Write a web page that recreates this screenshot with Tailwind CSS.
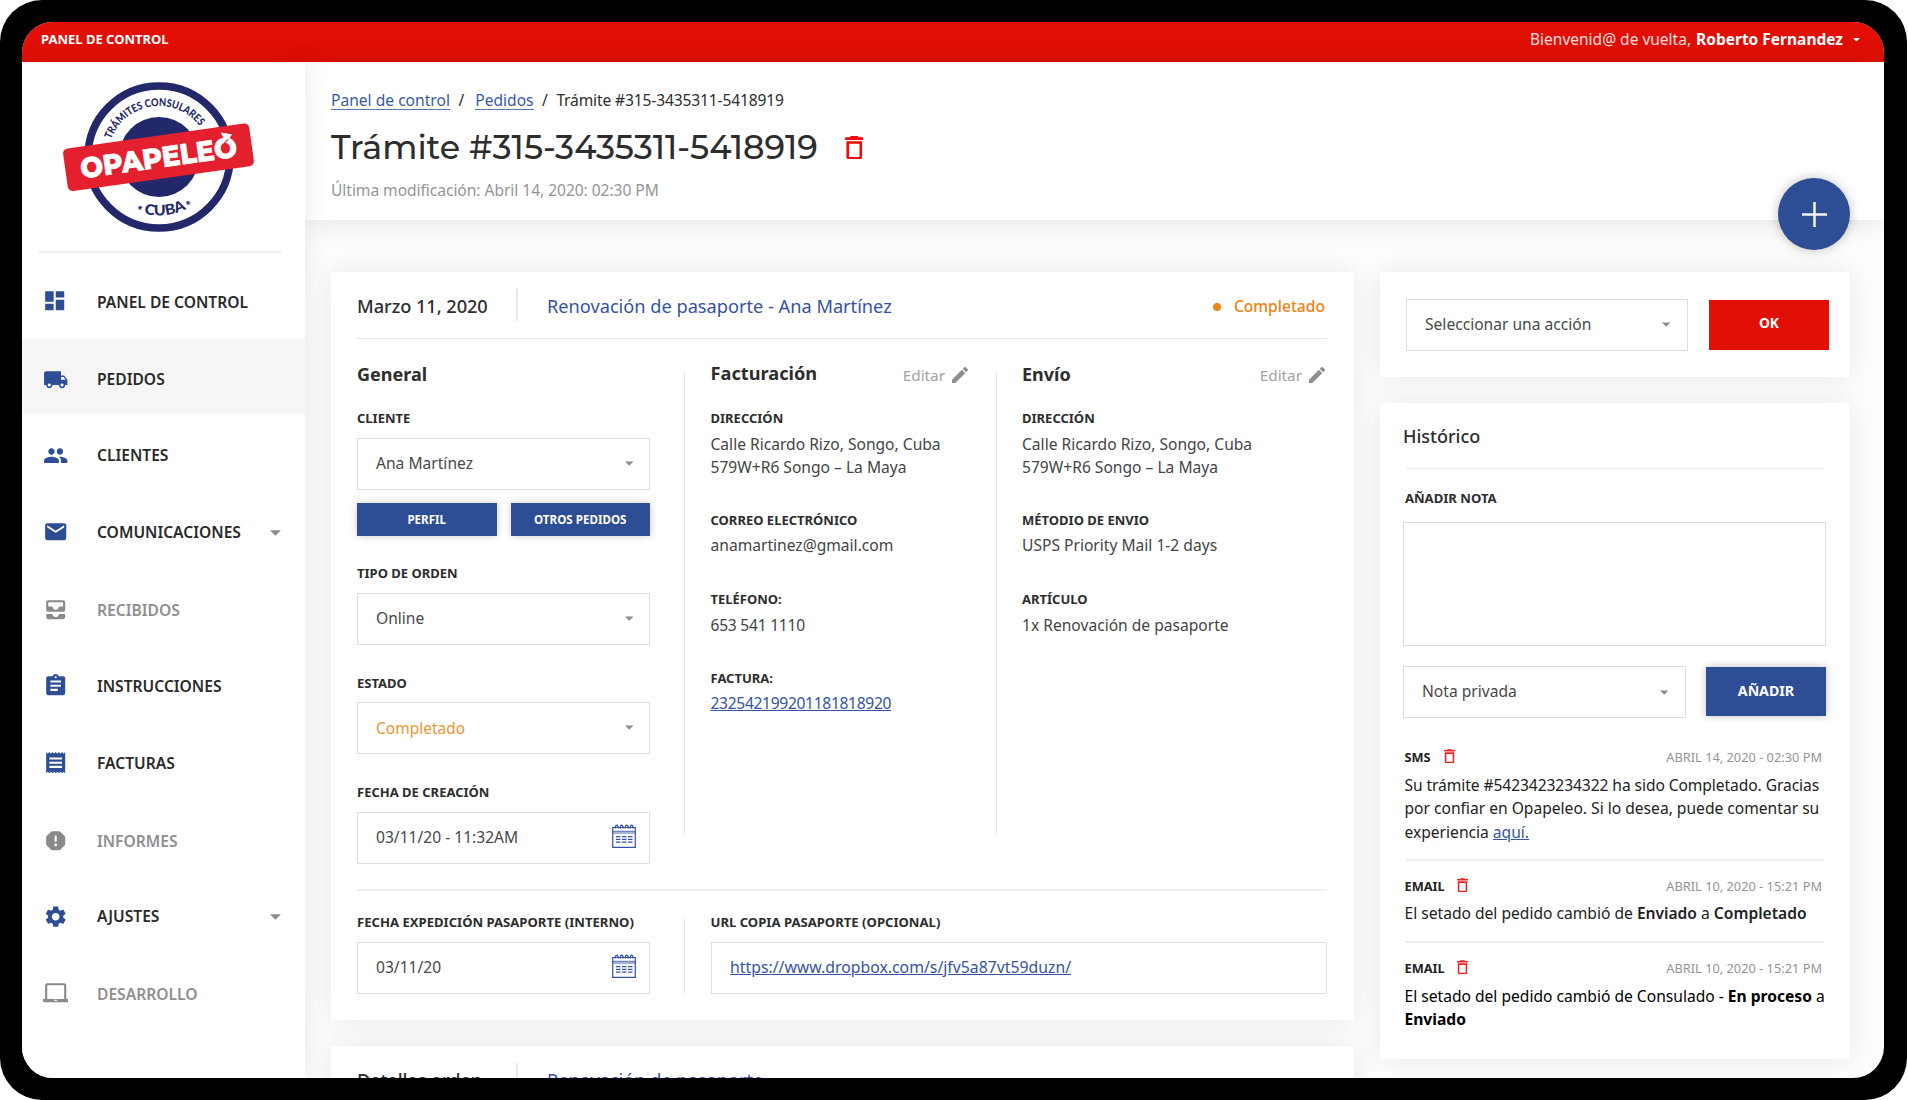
<!DOCTYPE html>
<html lang="es">
<head>
<meta charset="utf-8">
<title>Panel de control</title>
<script src="https://cdn.jsdelivr.net/npm/@tailwindcss/browser@4"></script>
</head>
<body class="bg-white font-['Noto_Sans','Open_Sans',sans-serif] text-[#2d2d2d]">
<svg class="hidden">
  <symbol id="trash" viewBox="5 3 14 18"><path d="M6 19c0 1.100.9 2 2 2h8c1.100 0 2-.9 2-2V7H6v12zM8 9h8v10H8V9zm7.500-5l-1-1h-5l-1 1H5v2h14V4z"/></symbol>
  <symbol id="pencil" viewBox="3 3 18 18"><path d="M3 17.250V21h3.750L17.810 9.940l-3.750-3.750L3 17.250zM20.710 7.040c.39-.39.39-1.020 0-1.410l-2.340-2.340c-.39-.39-1.020-.39-1.410 0l-1.830 1.830 3.750 3.750 1.830-1.830z"/></symbol>
  <symbol id="caret" viewBox="0 0 10 5"><path d="M0 0h10L5 5z"/></symbol>
  <symbol id="cal" viewBox="0 0 24 24"><g fill="none" stroke="currentColor" stroke-width="1.200"><path d="M.7 3.500h22.600v19.800H.7z"/><path d="M.7 7.300h22.600M.7 9h22.600" stroke-width=".9"/><path d="M3.200 4.500c0-4.500 3-4.500 3 0M8.200 4.500c0-4.500 3-4.500 3 0M13.200 4.500c0-4.500 3-4.500 3 0M18 4.500c0-4.500 3-4.500 3 0" stroke-width="1.300"/><path d="M4 12.700h16.500M4 15.400h16.500M4 18.100h16.500" stroke-width="1.300" stroke-dasharray="4.500 1.500"/></g></symbol>
</svg>
<div class="w-[1907px] h-[1100px] bg-black rounded-[42px] pt-[22px] pl-[22px] overflow-hidden">
<div class="w-[1862px] h-[1056px] bg-[#fdfdfd] rounded-[31px] overflow-hidden flex flex-col">

  <header class="h-[39.500px] shrink-0 bg-[#e10f05] text-white flex justify-between pl-[19px] pr-[24px]">
    <div class="text-[13px] font-bold leading-[35px]">PANEL DE CONTROL</div>
    <div class="flex items-center h-[35px] text-[15.500px]">
      <span class="text-white/85">Bienvenid@ de vuelta,</span>
      <span class="font-bold ml-[5px]">Roberto Fernandez</span>
      <svg class="w-[7px] h-[3.500px] ml-[10px] mt-[1px] fill-white"><use href="#caret"/></svg>
    </div>
  </header>

  <div class="flex flex-1 min-h-0">
    <aside class="w-[283px] shrink-0 bg-white shadow-[0_0_24px_rgba(0,0,0,0.1)] relative z-20">
      <div class="h-[189px] flex justify-center pt-[13px]">
        <svg class="w-[200px] h-[164px] -ml-[10px]" viewBox="0 0 200 164">
          <defs>
            <path id="arcTop" d="M49 82a51 51 0 0 1 102 0"/>
            <path id="arcBottom" d="M41.500 82a58.500 58.500 0 0 0 117 0"/>
          </defs>
          <circle cx="100" cy="82" r="71" fill="#fff" stroke="#23286b" stroke-width="7.600"/>
          <circle cx="100" cy="82" r="40" fill="#23286b"/>
          <g fill="#23286b" font-family="Lato, sans-serif" font-weight="900">
            <text font-size="10.800" textLength="109" lengthAdjust="spacingAndGlyphs"><textPath href="#arcTop" startOffset="18">TRÁMITES CONSULARES</textPath></text>
            <text font-size="14.500" textLength="43.500" lengthAdjust="spacingAndGlyphs"><textPath href="#arcBottom" startOffset="76.500">CUBA</textPath></text>
            <text font-size="13" dy="3.500"><textPath href="#arcBottom" startOffset="68">*</textPath></text>
            <text font-size="13" dy="3.500"><textPath href="#arcBottom" startOffset="122">*</textPath></text>
          </g>
          <g transform="translate(99.500 82.300) rotate(-8)">
            <rect x="-94" y="-21.500" width="188" height="43" rx="5" fill="#e4202e"/>
            <text x="-79" y="10.300" font-family="Montserrat, Lato, sans-serif" font-weight="800" font-size="28.500" fill="#fff" stroke="#fff" stroke-width=".7" textLength="158" lengthAdjust="spacingAndGlyphs">OPAPELEO</text>
            <path d="M65 -16l11 3.500-7 8z" fill="#fff"/>
            <path d="M66.500 -4.500l5-3.500" stroke="#e4202e" stroke-width="1.100"/>
          </g>
        </svg>
      </div>
      <div class="h-[2px] bg-[#efefef] ml-[17px] w-[242px]"></div>
      <nav class="mt-[9.700px] flex flex-col gap-[1.900px] text-[15.600px] font-semibold leading-[20px] text-[#2a2a2a] fill-[#2d4d94]">
        <a class="h-[75px] pt-[4px] pl-[20px] flex items-center"><svg class="size-[25.400px] -mt-[2px]" viewBox="0 0 24 24"><path d="M3 13h8V3H3v10zm0 8h8v-6H3v6zm10 0h8V11h-8v10zm0-18v6h8V3h-8z"/></svg><span class="ml-[29.600px]">PANEL DE CONTROL</span></a>
        <a class="h-[75px] pt-[4px] pl-[21px] flex items-center bg-[#f6f6f6]"><svg class="size-[25.400px] mt-[2px]" viewBox="0 0 24 24"><path d="M20 8h-3V4H3c-1.100 0-2 .9-2 2v11h2c0 1.660 1.340 3 3 3s3-1.340 3-3h6c0 1.660 1.340 3 3 3s3-1.340 3-3h2v-5l-3-4zM6 18.500c-.83 0-1.500-.67-1.500-1.500s.67-1.500 1.500-1.500 1.500.67 1.500 1.500-.67 1.500-1.500 1.500zm13.500-9l1.960 2.500H17V9.500h2.500zm-1.500 9c-.83 0-1.500-.67-1.500-1.500s.67-1.500 1.500-1.500 1.500.67 1.500 1.500-.67 1.500-1.500 1.500z"/></svg><span class="ml-[28.600px]">PEDIDOS</span></a>
        <a class="h-[75px] pt-[4px] pl-[21px] flex items-center"><svg class="size-[25.400px]" viewBox="0 0 24 24"><path d="M16 11c1.660 0 2.990-1.340 2.990-3S17.660 5 16 5c-1.660 0-3 1.340-3 3s1.340 3 3 3zm-8 0c1.660 0 2.990-1.340 2.990-3S9.660 5 8 5C6.340 5 5 6.340 5 8s1.340 3 3 3zm0 2c-2.330 0-7 1.170-7 3.500V19h14v-2.500c0-2.330-4.670-3.500-7-3.500zm8 0c-.29 0-.62.02-.97.05 1.160.84 1.970 1.970 1.970 3.450V19h6v-2.500c0-2.330-4.670-3.500-7-3.500z"/></svg><span class="ml-[28.600px]">CLIENTES</span></a>
        <a class="h-[75px] pt-[4px] pl-[21px] pr-[24px] flex items-center"><svg class="size-[25.400px] -mt-[2px]" viewBox="0 0 24 24"><path d="M20 4H4c-1.100 0-1.990.9-1.990 2L2 18c0 1.100.9 2 2 2h16c1.100 0 2-.9 2-2V6c0-1.100-.9-2-2-2zm0 4l-8 5-8-5V6l8 5 8-5v2z"/></svg><span class="ml-[28.600px]">COMUNICACIONES</span><svg class="w-[11px] h-[6px] ml-auto mt-[2px] fill-[#8c8c8c]"><use href="#caret"/></svg></a>
        <a class="h-[75px] pt-[4px] pl-[21px] flex items-center text-[#8f8f8f] fill-[#8a8a8a]"><svg class="size-[25.400px]" viewBox="0 0 24 24"><path d="M19 3H5c-1.100 0-2 .9-2 2v7c0 1.100.9 2 2 2h14c1.100 0 2-.9 2-2V5c0-1.100-.9-2-2-2zm0 6h-3.140c-.47 0-.84.33-.97.78C14.530 11.040 13.350 12 12 12s-2.530-.96-2.890-2.220c-.13-.45-.5-.78-.97-.78H5V6c0-.55.45-1 1-1h12c.55 0 1 .45 1 1v3zm-3.130 7H20c.55 0 1 .45 1 1v2c0 1.100-.9 2-2 2H5c-1.100 0-2-.9-2-2v-2c0-.55.45-1 1-1h4.130c.47 0 .85.34.98.8.35 1.270 1.510 2.200 2.890 2.200s2.540-.93 2.890-2.200c.13-.46.52-.8.98-.8z"/></svg><span class="ml-[28.600px] mt-[1px]">RECIBIDOS</span></a>
        <a class="h-[75px] pt-[4px] pl-[21px] flex items-center"><svg class="size-[25.400px]" viewBox="0 0 24 24"><path d="M19 3h-4.180C14.400 1.840 13.300 1 12 1c-1.300 0-2.400.84-2.820 2H5c-1.100 0-2 .9-2 2v14c0 1.100.9 2 2 2h14c1.100 0 2-.9 2-2V5c0-1.100-.9-2-2-2zm-7 0c.55 0 1 .45 1 1s-.45 1-1 1-1-.45-1-1 .45-1 1-1zm2 14H7v-2h7v2zm3-4H7v-2h10v2zm0-4H7V7h10v2z"/></svg><span class="ml-[28.600px] -mt-[1px]">INSTRUCCIONES</span></a>
        <a class="h-[75px] pt-[4px] pl-[21px] flex items-center"><svg class="size-[25.400px]" viewBox="0 0 24 24"><path d="M18 17H6v-2h12v2zm0-4H6v-2h12v2zm0-4H6V7h12v2zM3 22l1.500-1.500L6 22l1.500-1.500L9 22l1.500-1.500L12 22l1.500-1.500L15 22l1.500-1.500L18 22l1.500-1.500L21 22V2l-1.500 1.500L18 2l-1.500 1.500L15 2l-1.500 1.500L12 2l-1.500 1.500L9 2 7.500 3.500 6 2 4.500 3.500 3 2v20z"/></svg><span class="ml-[28.600px]">FACTURAS</span></a>
        <a class="h-[75px] pt-[4px] pl-[21px] flex items-center text-[#8f8f8f] fill-[#8a8a8a]"><svg class="size-[25.400px] mt-[1px]" viewBox="0 0 24 24"><path fill-rule="evenodd" d="M9 3h6c.7 0 1.100.2 1.600.7l3.700 3.700c.5.5.7.9.7 1.600v6c0 .7-.2 1.100-.7 1.600l-3.700 3.700c-.5.5-.9.7-1.600.7H9c-.7 0-1.100-.2-1.600-.7l-3.700-3.700C3.200 16.100 3 15.700 3 15V9c0-.7.2-1.100.7-1.600l3.700-3.700C7.900 3.200 8.300 3 9 3zM12 17.300c.72 0 1.300-.58 1.300-1.300s-.58-1.300-1.300-1.300-1.300.58-1.300 1.300.58 1.300 1.300 1.300zM12 7c-.55 0-1 .45-1 1v4c0 .55.45 1 1 1s1-.45 1-1V8c0-.55-.45-1-1-1z"/></svg><span class="ml-[28.600px] mt-[1.500px]">INFORMES</span></a>
        <a class="h-[75px] pt-[4px] pl-[21px] pr-[24px] flex items-center"><svg class="size-[25.400px]" viewBox="0 0 24 24"><path d="M19.140 12.940c.04-.3.06-.61.06-.94 0-.32-.02-.64-.07-.94l2.030-1.580c.18-.14.23-.41.12-.61l-1.920-3.320c-.12-.22-.37-.29-.59-.22l-2.390.96c-.5-.38-1.030-.7-1.620-.94l-.36-2.540c-.04-.24-.24-.41-.48-.41h-3.840c-.24 0-.43.17-.47.41l-.36 2.540c-.59.24-1.130.57-1.620.94l-2.390-.96c-.22-.08-.47 0-.59.22L2.740 8.870c-.12.21-.08.47.12.61l2.030 1.580c-.05.3-.09.63-.09.94s.02.64.07.94l-2.030 1.580c-.18.14-.23.41-.12.61l1.920 3.320c.12.22.37.29.59.22l2.390-.96c.5.38 1.030.7 1.620.94l.36 2.540c.05.24.24.41.48.41h3.840c.24 0 .44-.17.47-.41l.36-2.540c.59-.24 1.130-.56 1.620-.94l2.390.96c.22.08.47 0 .59-.22l1.920-3.320c.12-.22.07-.47-.12-.61l-2.010-1.580zM12 15.600c-1.980 0-3.600-1.620-3.600-3.600s1.620-3.600 3.600-3.600 3.600 1.620 3.600 3.600-1.620 3.600-3.600 3.600z"/></svg><span class="ml-[28.600px] -mt-[1px]">AJUSTES</span><svg class="w-[11px] h-[6px] ml-auto fill-[#8c8c8c]"><use href="#caret"/></svg></a>
        <a class="h-[75px] pt-[4px] pl-[21px] flex items-center text-[#8f8f8f] fill-[#8a8a8a]"><svg class="size-[25.400px] -mt-[2px]" viewBox="0 0 24 24"><path d="M22 18V5c0-1.100-.9-2-2-2H4c-1.100 0-2 .9-2 2v13H0v2c0 .55.450 1 1 1h22c.55 0 1-.45 1-1v-2h-2zM4 5h16v13H4V5zm9.500 14.500h-3v-.8h3z" fill-rule="evenodd"/></svg><span class="ml-[28.600px]">DESARROLLO</span></a>
      </nav>
    </aside>

    <main class="flex-1 min-w-0 flex flex-col text-[15.600px]">
      <section class="h-[158.500px] shrink-0 bg-white shadow-[0_0_28px_rgba(0,0,0,0.12)] relative z-10 pl-[26px] pt-[26.500px]">
        <div class="flex leading-[24px] whitespace-nowrap">
          <a class="text-[#3a59a4] border-b-[1.500px] border-[#5b74b3] h-[21.500px]">Panel de control</a><span class="ml-[8.500px]">/</span>
          <a class="ml-[11px] text-[#3a59a4] border-b-[1.500px] border-[#5b74b3] h-[21.500px]">Pedidos</a><span class="ml-[8.500px]">/</span>
          <span class="ml-[8.500px] tracking-[-0.150px]">Trámite #315-3435311-5418919</span>
        </div>
        <div class="flex items-center mt-[15.500px] h-[40px]">
          <h1 class="text-[33.300px] font-medium leading-[40px] -mt-[2px] whitespace-nowrap font-['Montserrat','Inter',sans-serif]">Trámite #315-3435311-5418919</h1>
          <svg class="w-[18.500px] h-[23.500px] ml-[27px] fill-[#fb0505]"><use href="#trash"/></svg>
        </div>
        <p class="mt-[10px] leading-[24px] text-[#949494] tracking-[-0.050px]">Última modificación: Abril 14, 2020: 02:30 PM</p>
        <button class="absolute right-[34px] top-[116.500px] size-[72px] rounded-full bg-[#2d4d94] shadow-[0_0_12px_rgba(0,0,0,0.25)] flex items-center justify-center">
          <svg class="size-[25px]" viewBox="0 0 25 25" fill="none" stroke="#f2f4f9" stroke-width="2.500"><path d="M12.500 0v25M0 12.500h25"/></svg>
        </button>
      </section>

      <div class="flex pl-[26px] pt-[52px] gap-[26px] items-start">
        <div class="w-[1023px] flex flex-col gap-[26px]">
          <section class="bg-white shadow-[0_0_26px_rgba(0,0,0,0.09)] pl-[26px] pr-[27px] pb-[26px]">
            <div class="h-[67px] border-b-[1.500px] border-[#e6e6e6] flex items-center text-[18.200px]">
              <span class="w-[159px] font-medium mt-[3.500px] tracking-[-0.050px]">Marzo 11, 2020</span>
              <span class="h-[32px] w-[1.500px] bg-[#e8e8e8]"></span>
              <span class="ml-[29.500px] text-[#35539f] whitespace-nowrap mt-[3.500px]">Renovación de pasaporte - Ana Martínez</span>
              <span class="ml-auto size-[8px] rounded-full bg-[#ee8412] mt-[4px]"></span>
              <span class="ml-[13px] mr-[2px] text-[15.600px] font-medium text-[#ee8412] mt-[4px]">Completado</span>
            </div>

            <div class="flex mt-[32px]">
              <div class="w-[327px] shrink-0 pr-[34px] -mt-[11.500px] flex flex-col text-[13px] font-bold leading-[18px]">
                <h2 class="text-[18px] leading-[28px]">General</h2>
                <label class="mt-[21.800px]">CLIENTE</label>
                <div class="mt-[10.500px] h-[52px] border-[1.500px] border-[#dedede] flex items-center justify-between pl-[18px] pr-[16px] pb-[1px] text-[15.600px] font-normal text-[#484848]"><span>Ana Martínez</span><svg class="w-[8.500px] h-[5px] fill-[#8c8c8c]"><use href="#caret"/></svg></div>
                <div class="mt-[13px] grid grid-cols-2 gap-[14px] text-[11.600px] text-white leading-[32px] text-center">
                  <button class="bg-[#2d4d94] h-[33px] pt-[1px] shadow-[0_0_8px_rgba(0,0,0,0.2)]">PERFIL</button>
                  <button class="bg-[#2d4d94] h-[33px] pt-[1px] shadow-[0_0_8px_rgba(0,0,0,0.2)]">OTROS PEDIDOS</button>
                </div>
                <label class="mt-[28.500px]">TIPO DE ORDEN</label>
                <div class="mt-[10.500px] h-[52px] border-[1.500px] border-[#dedede] flex items-center justify-between pl-[18px] pr-[16px] pb-[1px] text-[15.600px] font-normal text-[#484848]"><span>Online</span><svg class="w-[8.500px] h-[5px] fill-[#8c8c8c]"><use href="#caret"/></svg></div>
                <label class="mt-[28.800px]">ESTADO</label>
                <div class="mt-[10.500px] h-[52px] border-[1.500px] border-[#dedede] flex items-center justify-between pl-[18px] pr-[16px] pb-[1px] text-[15.500px] font-normal text-[#ee9433]"><span>Completado</span><svg class="w-[8.500px] h-[5px] fill-[#8c8c8c]"><use href="#caret"/></svg></div>
                <label class="mt-[29.300px]">FECHA DE CREACIÓN</label>
                <div class="mt-[10.500px] h-[52px] border-[1.500px] border-[#dedede] flex items-center justify-between pl-[18px] pr-[13px] pb-[1px] text-[15.600px] font-normal text-[#484848]"><span>03/11/20 - 11:32AM</span><svg class="size-[24px] text-[#35539f] -mt-[2px]"><use href="#cal"/></svg></div>
              </div>
              <div class="w-[312px] h-[464px] shrink-0 border-l-[1.500px] border-[#e8e8e8] pl-[25.500px]">
                <div class="-mt-[11.500px] pr-[28px] flex items-center h-[28px]">
                  <h2 class="text-[18.200px] font-bold mt-[1px]">Facturación</h2>
                  <span class="ml-auto text-[15.300px] text-[#a2a2a2] mt-[3px]">Editar</span><svg class="size-[16px] ml-[7px] fill-[#8e8e8e] mt-[2px]"><use href="#pencil"/></svg>
                </div>
                <dl class="mt-[21.800px] leading-[23.500px] text-[#444] whitespace-nowrap">
                  <dt class="text-[13px] font-bold leading-[18px] text-[#2d2d2d] mb-[5.500px]">DIRECCIÓN</dt>
                  <dd>Calle Ricardo Rizo, Songo, Cuba<br>579W+R6 Songo – La Maya</dd>
                  <dt class="text-[13px] font-bold leading-[18px] text-[#2d2d2d] mb-[5.500px] mt-[31.200px]">CORREO ELECTRÓNICO</dt>
                  <dd>anamartinez@gmail.com</dd>
                  <dt class="text-[13px] font-bold leading-[18px] text-[#2d2d2d] mb-[5.500px] mt-[32.200px]">TELÉFONO:</dt>
                  <dd class="tracking-[-0.250px]">653 541 1110</dd>
                  <dt class="text-[13px] font-bold leading-[18px] text-[#2d2d2d] mb-[5.500px] mt-[31.500px]">FACTURA:</dt>
                  <dd class="text-[#35539f] tracking-[-0.320px]"><a class="underline">232542199201181818920</a></dd>
                </dl>
              </div>
              <div class="flex-1 h-[464px] border-l-[1.500px] border-[#e8e8e8] pl-[25px]">
                <div class="-mt-[11.500px] pr-[2px] flex items-center h-[28px]">
                  <h2 class="text-[18px] font-bold mt-[1px]">Envío</h2>
                  <span class="ml-auto text-[15.300px] text-[#a2a2a2] mt-[3px]">Editar</span><svg class="size-[16px] ml-[7px] fill-[#8e8e8e] mt-[2px]"><use href="#pencil"/></svg>
                </div>
                <dl class="mt-[21.800px] leading-[23.500px] text-[#444] whitespace-nowrap">
                  <dt class="text-[13px] font-bold leading-[18px] text-[#2d2d2d] mb-[5.500px]">DIRECCIÓN</dt>
                  <dd>Calle Ricardo Rizo, Songo, Cuba<br>579W+R6 Songo – La Maya</dd>
                  <dt class="text-[13px] font-bold leading-[18px] text-[#2d2d2d] mb-[5.500px] mt-[31.200px]">MÉTODIO DE ENVIO</dt>
                  <dd>USPS Priority Mail 1-2 days</dd>
                  <dt class="text-[13px] font-bold leading-[18px] text-[#2d2d2d] mb-[5.500px] mt-[32.200px]">ARTÍCULO</dt>
                  <dd>1x Renovación de pasaporte</dd>
                </dl>
              </div>
            </div>

            <div class="mt-[25px] h-[2px] bg-[#efefef]"></div>
            <div class="flex mt-[27px] text-[13.100px] font-bold leading-[18px]">
              <div class="w-[327px] shrink-0 pr-[34px] -mt-[4.500px] flex flex-col">
                <label class="whitespace-nowrap">FECHA EXPEDICIÓN PASAPORTE (INTERNO)</label>
                <div class="mt-[10.500px] h-[52px] border-[1.500px] border-[#dedede] flex items-center justify-between pl-[18px] pr-[13px] pb-[1px] text-[15.600px] font-normal text-[#484848]"><span>03/11/20</span><svg class="size-[24px] text-[#35539f] -mt-[2px]"><use href="#cal"/></svg></div>
              </div>
              <div class="flex-1 border-l-[1.500px] border-[#e8e8e8] pl-[25.500px]">
                <div class="-mt-[4.500px] flex flex-col">
                  <label>URL COPIA PASAPORTE (OPCIONAL)</label>
                  <div class="mt-[10.500px] h-[52px] border-[1.500px] border-[#dedede] flex items-center pl-[18.500px] pb-[1px] text-[15.800px] font-normal text-[#35539f]"><a class="underline">https://www.dropbox.com/s/jfv5a87vt59duzn/</a></div>
                </div>
              </div>
            </div>
          </section>

          <section class="bg-white shadow-[0_0_26px_rgba(0,0,0,0.09)] pl-[26px] pr-[27px] h-[200px]">
            <div class="h-[66.500px] flex items-center text-[18.200px]">
              <span class="w-[159px] font-medium mt-[3px] tracking-[-0.100px]">Detalles orden</span>
              <span class="h-[32px] w-[1.500px] bg-[#e8e8e8]"></span>
              <span class="ml-[29.500px] text-[#35539f] mt-[3px]">Renovación de pasaporte</span>
            </div>
          </section>
        </div>

        <div class="w-[470px] flex flex-col gap-[26px]">
          <section class="h-[105px] bg-white shadow-[0_0_26px_rgba(0,0,0,0.09)] pl-[26px] pt-[26.500px] flex items-start">
            <div class="w-[282px] h-[52px] border-[1.500px] border-[#dedede] flex items-center justify-between pl-[18px] pr-[17px] text-[15.600px] text-[#484848]"><span>Seleccionar una acción</span><svg class="w-[8.500px] h-[5px] fill-[#8c8c8c]"><use href="#caret"/></svg></div>
            <button class="ml-[21px] mt-[1px] w-[120px] h-[50px] bg-[#e10f05] text-white font-bold text-[13.800px] leading-[20px] pb-[3px]">OK</button>
          </section>

          <section class="h-[656px] bg-white shadow-[0_0_26px_rgba(0,0,0,0.09)] pl-[23px] pr-[24px]">
            <h2 class="text-[18px] leading-[26px] font-medium pt-[20px]">Histórico</h2>
            <div class="h-[1.500px] bg-[#e8e8e8] mt-[18.500px] ml-[3px] mr-[2px]"></div>
            <label class="block mt-[19.500px] ml-[2px] text-[13.100px] leading-[18px] font-bold">AÑADIR NOTA</label>
            <div class="mt-[15.500px] h-[124px] border-[1.500px] border-[#dedede]"></div>
            <div class="mt-[19.500px] flex items-start">
              <div class="w-[283px] h-[52px] border-[1.500px] border-[#dedede] flex items-center justify-between pl-[18px] pr-[17px] pt-[1px] text-[15.600px] text-[#484848]"><span>Nota privada</span><svg class="w-[8.500px] h-[5px] fill-[#8c8c8c]"><use href="#caret"/></svg></div>
              <button class="ml-[20px] mt-[1px] w-[120px] h-[49px] bg-[#2d4d94] text-white font-bold text-[14.200px] leading-[46px] shadow-[0_0_8px_rgba(0,0,0,0.25)]">AÑADIR</button>
            </div>
            <div class="pl-[1.500px] leading-[23.500px] text-[#222] whitespace-nowrap">
              <div class="mt-[30px] pr-[4px] flex items-center h-[20px] text-[12.800px]">
                <span class="font-bold">SMS</span><svg class="w-[11px] h-[14.500px] ml-[13px] -mt-[2px] fill-[#ef2222]"><use href="#trash"/></svg><span class="ml-auto text-[#949494]">ABRIL 14, 2020 - 02:30 PM</span>
              </div>
              <p class="mt-[6px]"><span class="tracking-[-0.080px]">Su trámite #5423423234322 ha sido Completado. Gracias</span><br>por confiar en Opapeleo. Si lo desea, puede comentar su<br>experiencia <a class="text-[#35539f] underline">aquí.</a></p>
              <div class="h-[2px] bg-[#ededed] mt-[15px] ml-[1.500px] mr-[2px]"></div>
              <div class="mt-[16px] pr-[4px] flex items-center h-[20px] text-[12.800px]">
                <span class="font-bold">EMAIL</span><svg class="w-[11px] h-[14.500px] ml-[12px] -mt-[3px] fill-[#ef2222]"><use href="#trash"/></svg><span class="ml-auto text-[#949494]">ABRIL 10, 2020 - 15:21 PM</span>
              </div>
              <p class="mt-[5px]">El setado del pedido cambió de <b class="font-semibold">Enviado</b> a <b class="font-semibold">Completado</b></p>
              <div class="h-[2px] bg-[#ededed] mt-[15.500px] ml-[1.500px] mr-[2px]"></div>
              <div class="mt-[16px] pr-[4px] flex items-center h-[20px] text-[12.800px]">
                <span class="font-bold">EMAIL</span><svg class="w-[11px] h-[14.500px] ml-[12px] -mt-[3px] fill-[#ef2222]"><use href="#trash"/></svg><span class="ml-auto text-[#949494]">ABRIL 10, 2020 - 15:21 PM</span>
              </div>
              <p class="mt-[5.500px] text-black">El setado del pedido cambió de Consulado - <b>En proceso</b> a<br><b>Enviado</b></p>
            </div>
          </section>
        </div>
      </div>
    </main>
  </div>
</div>
</div>
</body>
</html>
